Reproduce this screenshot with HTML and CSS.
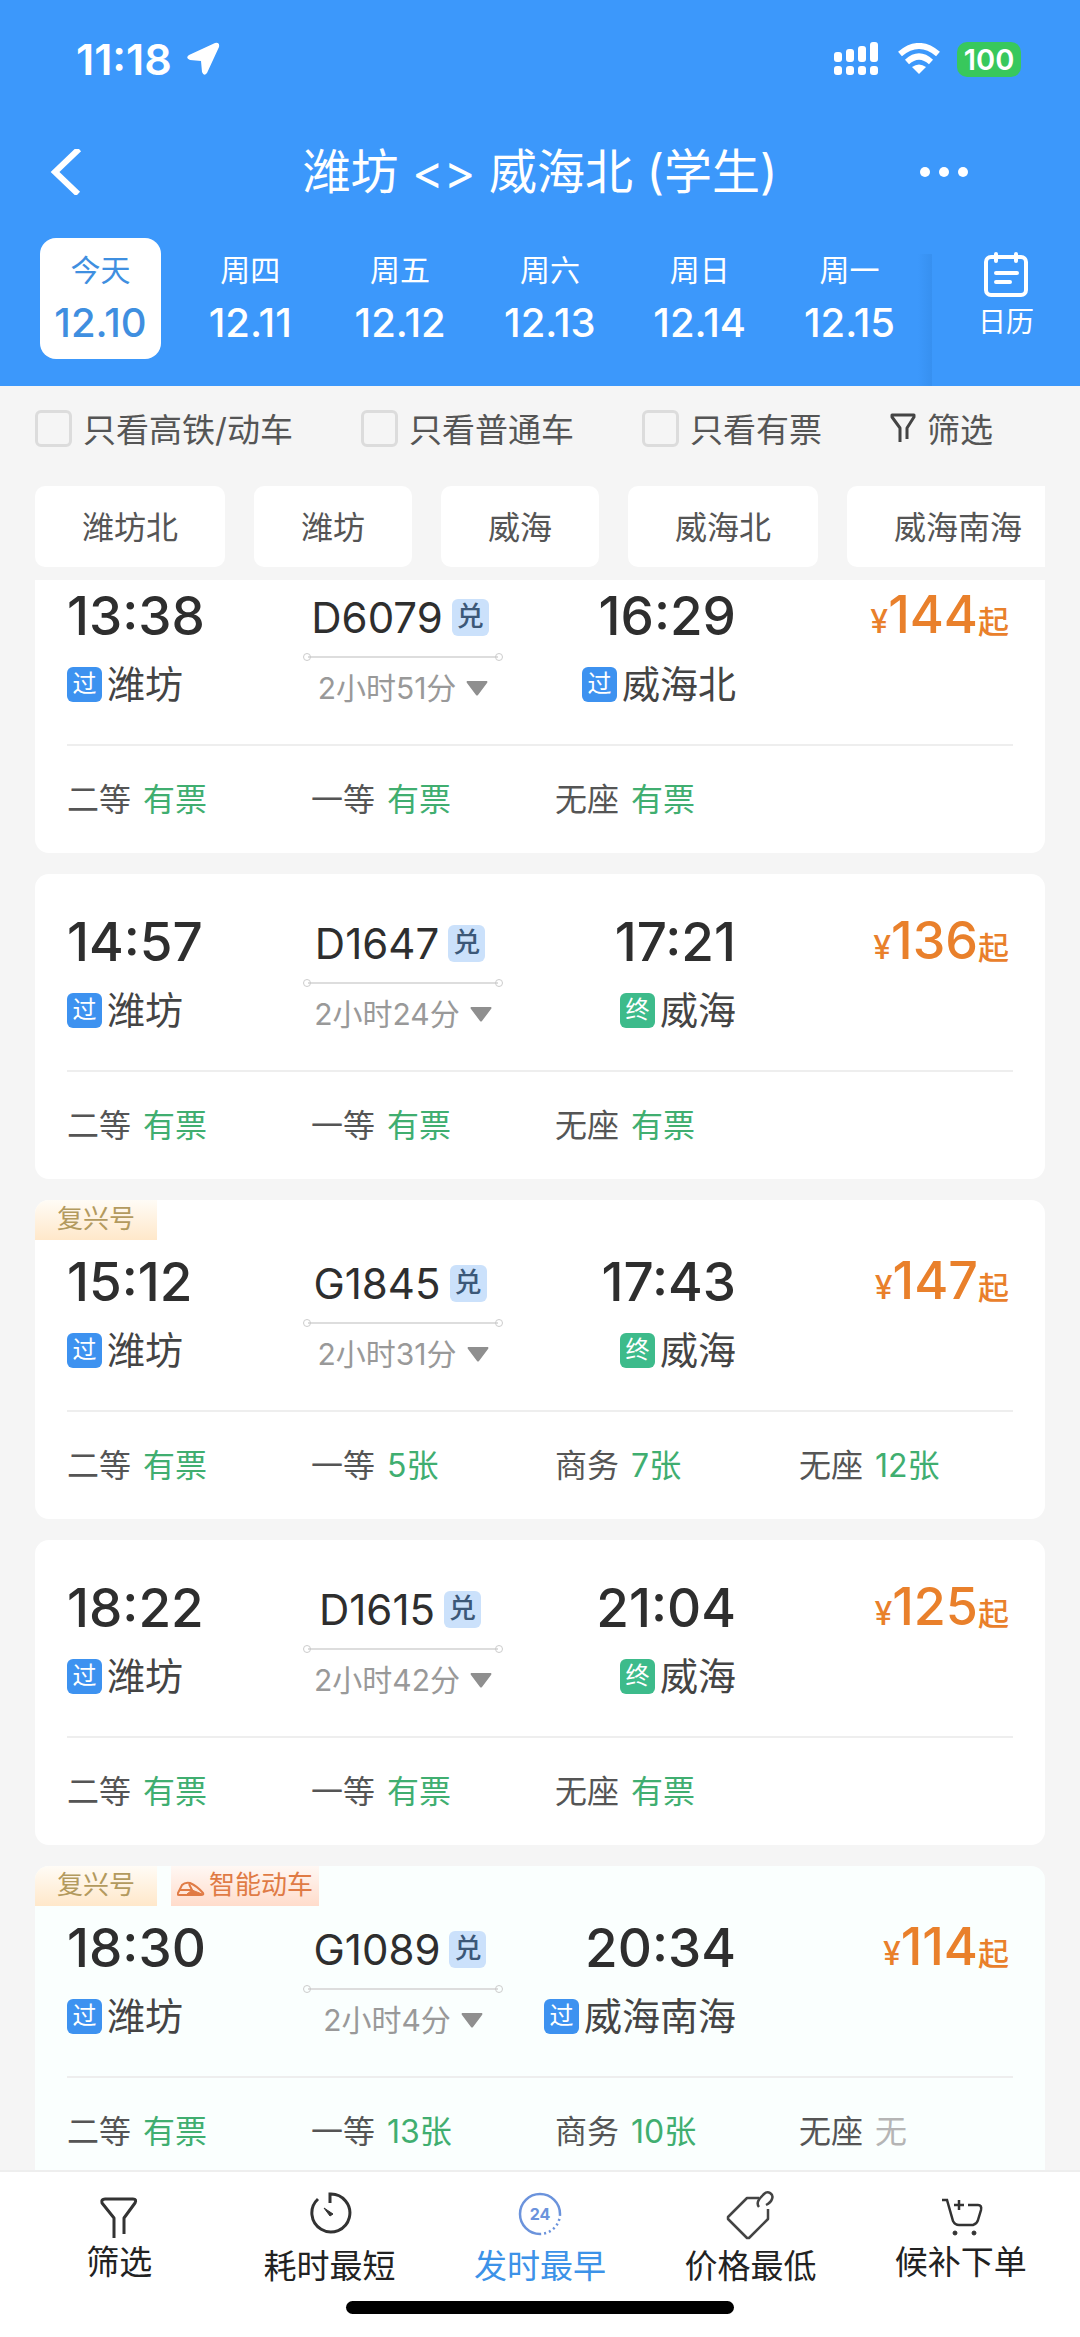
FILE: index.html
```html
<!DOCTYPE html>
<html lang="zh-CN">
<head>
    <meta charset="UTF-8">
    <meta name="viewport" content="width=device-width, initial-scale=1.0">
    <title>潍坊 - 威海北</title>
    <link rel="stylesheet" href="styles.css">
</head>
<body>

    <header class="header">
        <div class="status">
            <span class="clock">11:18</span>
            <svg class="location" width="34" height="34" viewBox="0 0 34 34"><path d="M29 1 L3 13 Q-1 16 4 18 L15 19 L16 30 Q18 35 21 31 L33 5 Q34 0 29 1Z" fill="#fff"/></svg>
            <svg class="signal" width="46" height="34" viewBox="0 0 46 34" fill="#fff">
                <rect x="0" y="10" width="8" height="10" rx="3"/>
                <rect x="12" y="7" width="8" height="13" rx="3"/>
                <rect x="24" y="4" width="8" height="16" rx="3"/>
                <rect x="36" y="0" width="8" height="20" rx="3"/>
                <rect x="0" y="24" width="8" height="9" rx="3"/>
                <rect x="12" y="24" width="8" height="9" rx="3"/>
                <rect x="24" y="24" width="8" height="9" rx="3"/>
                <rect x="36" y="24" width="8" height="9" rx="3"/>
            </svg>
            <svg class="wifi" width="42" height="32" viewBox="0 0 42 32" fill="none" stroke="#fff" stroke-width="6">
                <path d="M2 11 Q21 -5 40 11"/>
                <path d="M9 19 Q21 8 33 19"/>
                <path d="M21 31 L14 24 Q21 19 28 24Z" fill="#fff" stroke="none"/>
            </svg>
            <span class="battery">100</span>
        </div>

        <div class="titlebar">
            <button class="back" aria-label="返回"><svg width="32" height="46" viewBox="0 0 32 46"><path d="M29 0 L5 23 L28 45" fill="none" stroke="#fff" stroke-width="6"/></svg></button>
            <h1>潍坊 &lt;&gt; 威海北 (学生)</h1>
            <button class="more" aria-label="更多"><i></i><i></i><i></i></button>
        </div>

        <div class="dates">
            <div class="days">
                <button class="day active"><span>今天</span><b>12.10</b></button>
                <button class="day"><span>周四</span><b>12.11</b></button>
                <button class="day"><span>周五</span><b>12.12</b></button>
                <button class="day"><span>周六</span><b>12.13</b></button>
                <button class="day"><span>周日</span><b>12.14</b></button>
                <button class="day"><span>周一</span><b>12.15</b></button>
            </div>
            <button class="calendar">
                <svg width="46" height="46" viewBox="0 0 46 46" fill="none" stroke="#fff" stroke-width="4" stroke-linecap="round">
                    <rect x="3" y="5" width="40" height="38" rx="5"/>
                    <path d="M13 2 V9 M33 2 V9 M13 21 H34 M13 30 H27"/>
                </svg>
                <span>日历</span>
            </button>
        </div>
    </header>

    <div class="filters">
        <label><input type="checkbox">只看高铁/动车</label>
        <label><input type="checkbox">只看普通车</label>
        <label><input type="checkbox">只看有票</label>
        <button class="filter">
            <svg width="26" height="30" viewBox="0 0 26 30" fill="none" stroke="#444" stroke-width="3" stroke-linejoin="round"><path d="M10 29 V15 L2 4 V2 H24 V4 L17 15 V26"/></svg>筛选
        </button>
    </div>

    <div class="stations">
        <button>潍坊北</button>
        <button>潍坊</button>
        <button>威海</button>
        <button>威海北</button>
        <button>威海南海</button>
    </div>

    <main class="list" id="list"></main>

    <nav class="tabbar">
        <button>
            <svg width="44" height="50" viewBox="0 0 44 50" fill="none" stroke="#333" stroke-width="3" stroke-linejoin="round"><path d="M17 48 V28 L5 13 Q4 9 8 9 H36 Q40 9 38 13 L27 28 V44"/></svg>
            <span>筛选</span>
        </button>
        <button class="low">
            <svg width="44" height="50" viewBox="0 0 44 50" fill="none" stroke="#333" stroke-width="3"><path d="M10 9 A19 19 0 1 0 22 4 V13"/><path d="M16 18 L25 24 L22 26Z" fill="#333" stroke-width="1"/></svg>
            <span>耗时最短</span>
        </button>
        <button class="low active">
            <svg width="44" height="50" viewBox="0 0 44 50" fill="none" stroke="#6b93dc" stroke-width="2.5">
                <path d="M22 44 A20 20 0 1 1 42 24"/>
                <path d="M42 24 A20 20 0 0 1 22 44" stroke-dasharray="2 3"/>
                <text x="22" y="30" text-anchor="middle">24</text>
            </svg>
            <span>发时最早</span>
        </button>
        <button class="low">
            <svg width="48" height="50" viewBox="0 0 48 50" fill="none" stroke="#444" stroke-width="2.5" stroke-linejoin="round"><path d="M33 8 H21 L2 27 V29 L21 48 H23 L42 29 V19"/><path d="M33 17 C29 12 35 7 38 4 C42 0 48 4 46 9 C45 12 42 14 40 15"/></svg>
            <span>价格最低</span>
        </button>
        <button>
            <svg width="44" height="50" viewBox="0 0 44 50" fill="none" stroke="#333" stroke-width="2.5"><path d="M3 10 H8 L14 31 Q16 35 20 35 H34 Q38 34 39 30 L42 20 Q43 15 39 15 H29 M15 15 H25 M20 10 V20"/><circle cx="16" cy="43" r="2" fill="#333" stroke-width="1"/><circle cx="35" cy="43" r="2" fill="#333" stroke-width="1"/></svg>
            <span>候补下单</span>
        </button>
    </nav>
    <div class="home"><span></span></div>

    <script>
        const trains = [
            { no: 'D6079', from: '13:38', to: '16:29', end: '威海北', mark: '过', time: '2小时51分', price: 144,
              seats: [['二等', '有票'], ['一等', '有票'], ['无座', '有票']] },
            { no: 'D1647', from: '14:57', to: '17:21', end: '威海', mark: '终', time: '2小时24分', price: 136,
              seats: [['二等', '有票'], ['一等', '有票'], ['无座', '有票']] },
            { no: 'G1845', from: '15:12', to: '17:43', end: '威海', mark: '终', time: '2小时31分', price: 147, fuxing: true,
              seats: [['二等', '有票'], ['一等', '5张'], ['商务', '7张'], ['无座', '12张']] },
            { no: 'D1615', from: '18:22', to: '21:04', end: '威海', mark: '终', time: '2小时42分', price: 125,
              seats: [['二等', '有票'], ['一等', '有票'], ['无座', '有票']] },
            { no: 'G1089', from: '18:30', to: '20:34', end: '威海南海', mark: '过', time: '2小时4分', price: 114, fuxing: true, smart: true,
              seats: [['二等', '有票'], ['一等', '13张'], ['商务', '10张'], ['无座', '无']] }
        ];

        const trainIcon = `<svg width="28" height="16" viewBox="0 0 28 16" fill="none" stroke="#e07b45" stroke-width="2"><path d="M1 12 L5 4 Q8 1 13 2 Q20 5 26 12 Q27 14 24 14 H2 Q0 14 1 12Z"/><path d="M3 9 H15 L12 3"/><path d="M15 9 L25 13 H10Z" fill="#e07b45" stroke-width="1"/></svg>`;

        function mark(text) {
            return `<i class="mark ${text === '终' ? 'end' : ''}">${text}</i>`;
        }

        function renderTags(t) {
            if (!t.fuxing) return '';
            return `<div class="tags">
                <span class="tag">复兴号</span>
                ${t.smart ? `<span class="tag smart">${trainIcon}智能动车</span>` : ''}
            </div>`;
        }

        function renderTrain(t) {
            return `<article class="card ${t.fuxing ? 'tagged' : ''} ${t.smart ? 'tinted' : ''}">
                ${renderTags(t)}
                <div class="trip">
                    <div class="stop">
                        <div class="hour">${t.from}</div>
                        <div class="place">${mark('过')}潍坊</div>
                    </div>
                    <div class="route">
                        <div class="number">${t.no}<i>兑</i></div>
                        <div class="line"></div>
                        <button class="duration">${t.time}<svg width="22" height="15" viewBox="0 0 22 15"><path d="M1 0 H21 Q22 1 21 2 L12 14 Q11 15 10 14 L1 2 Q0 1 1 0Z" fill="#8f8f8f"/></svg></button>
                    </div>
                    <div class="stop arrive">
                        <div class="hour">${t.to}</div>
                        <div class="place">${mark(t.mark)}${t.end}</div>
                    </div>
                    <div class="price"><small>¥</small>${t.price}<em>起</em></div>
                </div>
                <div class="seats">
                    ${t.seats.map(([name, left]) => `<div>${name}<span class="${left === '无' ? 'none' : ''}">${left}</span></div>`).join('')}
                </div>
            </article>`;
        }

        document.getElementById('list').innerHTML = trains.map(renderTrain).join('');
    </script>

</body>
</html>
```
FILE: styles.css
```css
* {
    box-sizing: border-box;
}

body {
    display: flex;
    flex-direction: column;
    height: 100vh;
    margin: 0;
    overflow: hidden;
    background-color: #f5f5f5;
    color: #333;
    font-family: Inter, "Noto Sans CJK SC", sans-serif;
    font-size: 32px;
}

button {
    margin: 0;
    padding: 0;
    border: none;
    background: none;
    color: inherit;
    font: inherit;
    cursor: pointer;
}

i, em {
    font-style: normal;
}

svg {
    display: block;
}

/* header */
.header {
    flex: none;
    background-color: #3c98fb;
    color: #fff;
}

.status {
    display: flex;
    align-items: center;
    height: 118px;
    padding: 0 59px 0 76px;
}

.clock {
    font-size: 43px;
    font-weight: 600;
}

.location {
    margin-left: 14px;
}

.signal {
    margin-left: auto;
}

.wifi {
    margin: 0 17px 0 18px;
}

.battery {
    width: 64px;
    border-radius: 10px;
    background-color: #38c85c;
    font-size: 29px;
    font-weight: 600;
    line-height: 35px;
    text-align: center;
}

.titlebar {
    display: flex;
    align-items: center;
    justify-content: space-between;
    height: 108px;
    padding: 0 50px;
}

.titlebar h1 {
    margin: 0;
    font-size: 48px;
    font-weight: 400;
    line-height: 60px;
}

.back,
.more {
    width: 110px;
}

.more {
    display: flex;
    gap: 9px;
}

.more i {
    width: 10px;
    height: 10px;
    border-radius: 50%;
    background-color: #fff;
}

.dates {
    display: flex;
    height: 160px;
}

.days {
    display: flex;
    flex: 1;
    justify-content: space-between;
    align-items: flex-start;
    padding: 12px 22px 0 40px;
    background: linear-gradient(to left, #3790f0, #3c98fb) right bottom / 14px 132px no-repeat;
}

.day {
    display: flex;
    flex-direction: column;
    align-items: center;
    width: 121px;
    height: 121px;
    padding-top: 12px;
    border-radius: 16px;
}

.day span {
    font-size: 30px;
    line-height: 40px;
}

.day b {
    font-size: 40px;
    font-weight: 500;
    line-height: 66px;
}

.day.active {
    background-color: #fff;
    color: #3f8fe0;
}

.calendar {
    display: flex;
    flex-direction: column;
    align-items: center;
    width: 148px;
    padding-top: 26px;
    font-size: 28px;
    line-height: 48px;
}

/* filters */
.filters {
    display: flex;
    flex: none;
    gap: 68px;
    height: 84px;
    padding: 0 35px;
    color: #555;
    font-size: 33px;
    white-space: nowrap;
}

.filters label,
.filter {
    display: flex;
    align-items: center;
    gap: 11px;
}

.filters input {
    width: 37px;
    height: 37px;
    margin: 0;
    border: 3px solid #dcdcdc;
    border-radius: 6px;
    appearance: none;
}

.filters input:checked {
    background-color: #3c98fb;
}

.stations {
    display: flex;
    flex: none;
    gap: 29px;
    margin: 16px 35px 13px;
    overflow: hidden;
}

.stations button {
    flex: none;
    height: 81px;
    padding: 0 47px 3px;
    border-radius: 10px;
    background-color: #fff;
    color: #555;
}

/* train list */
.list {
    display: flex;
    flex: 1;
    flex-direction: column;
    gap: 21px;
    min-height: 0;
    padding: 0 35px;
    overflow: hidden;
}

.card {
    flex: none;
    padding: 36px 32px 29px;
    border-radius: 14px;
    background-color: #fff;
}

.card:first-child {
    margin-top: -32px;
}

.card.tagged {
    padding-top: 0;
}

.card.tinted {
    border-radius: 14px 14px 0 0;
    background-color: #fafffe;
}

.tags {
    display: flex;
    gap: 14px;
    margin: 0 -32px 10px;
}

.tag {
    display: flex;
    align-items: center;
    height: 40px;
    padding: 0 22px 2px;
    border-top-left-radius: 14px;
    background: linear-gradient(#fffcf6, #ffe8ca);
    color: #b39a5e;
    font-size: 26px;
    line-height: 36px;
}

.tag.smart {
    gap: 4px;
    padding: 0 6px 2px;
    border-radius: 0;
    background: linear-gradient(#fff8f4, #ffdccb);
    color: #e07b45;
}

.tag svg {
    margin-top: 8px;
}

.trip {
    display: grid;
    grid-template-columns: 236fr 200fr 233fr 277fr;
}

.hour {
    color: #2e2e2e;
    font-size: 53px;
    font-weight: 500;
    line-height: 64px;
}

.place {
    display: flex;
    align-items: center;
    gap: 5px;
    margin-top: 9px;
    color: #444;
    font-size: 38px;
    line-height: 54px;
    white-space: nowrap;
}

.mark {
    width: 35px;
    height: 35px;
    border-radius: 6px;
    background-color: #3d92f0;
    color: #fff;
    font-size: 24px;
    line-height: 33px;
    text-align: center;
}

.mark.end {
    background-color: #3dbb8b;
}

.arrive {
    text-align: right;
}

.arrive .place {
    justify-content: flex-end;
}

.route {
    display: flex;
    flex-direction: column;
    align-items: center;
}

.number {
    display: flex;
    align-items: center;
    gap: 9px;
    height: 66px;
    padding-right: 6px;
    color: #2e2e2e;
    font-size: 42px;
    font-weight: 400;
}

.number i {
    width: 37px;
    height: 37px;
    border-radius: 6px;
    background-color: #cbe1fb;
    color: #3c5878;
    font-size: 27px;
    font-weight: 500;
    line-height: 35px;
    text-align: center;
}

/* thin rule with a small ring on both ends */
.line {
    display: flex;
    align-items: center;
    justify-content: space-between;
    width: 100%;
    height: 6px;
    margin-top: 4px;
    background: linear-gradient(#ddd, #ddd) center / calc(100% - 10px) 2px no-repeat;
}

.line::before,
.line::after {
    content: "";
    width: 6px;
    height: 6px;
    border: 1px solid #ccc;
    border-radius: 50%;
}

.duration {
    display: flex;
    align-items: center;
    gap: 10px;
    color: #999;
    font-size: 30px;
    line-height: 56px;
    white-space: nowrap;
}

.price {
    padding-right: 4px;
    color: #e9802b;
    font-size: 52px;
    font-weight: 500;
    line-height: 62px;
    text-align: right;
}

.price small {
    font-size: 32px;
}

.price em {
    font-size: 31px;
}

.seats {
    display: grid;
    grid-template-columns: repeat(4, 244px);
    margin-top: 28px;
    padding-top: 30px;
    border-top: 2px solid #eee;
    color: #555;
    line-height: 48px;
}

.seats span {
    margin-left: 12px;
    color: #40ae70;
}

.seats .none {
    color: #b5b5b5;
}

/* bottom bar */
.tabbar {
    display: flex;
    flex: none;
    height: 131px;
    padding: 0 14px;
    border-top: 2px solid #eee;
    background-color: #fff;
    color: #222;
    font-size: 33px;
}

.tabbar button {
    display: flex;
    flex: 1;
    flex-direction: column;
    align-items: center;
    padding-top: 18px;
    line-height: 44px;
}

.tabbar .low span {
    padding-top: 4px;
}

.tabbar .active {
    color: #3c92e8;
}

.tabbar text {
    fill: #6b93dc;
    stroke: none;
    font-size: 16px;
    font-weight: 700;
}

.home {
    display: flex;
    flex: none;
    justify-content: center;
    height: 36px;
    background-color: #fff;
}

.home span {
    width: 36%;
    height: 13px;
    border-radius: 7px;
    background-color: #000;
}
```
